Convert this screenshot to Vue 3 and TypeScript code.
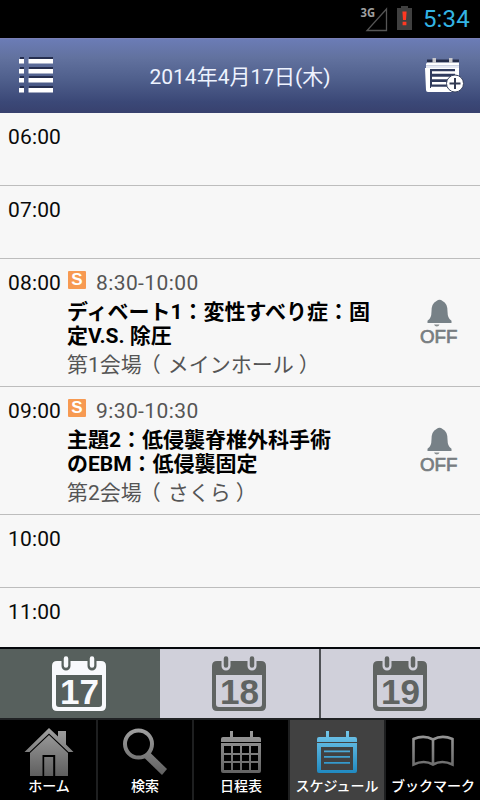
<script setup lang="ts">
interface Session {
  time: string
  title: string[]
  room: string
  hall: string
}
interface Slot {
  hour: string
  session?: Session
}

const slots: Slot[] = [
  { hour: '06:00' },
  { hour: '07:00' },
  {
    hour: '08:00',
    session: { time: '8:30-10:00', title: ['ディベート1：変性すべり症：固', '定V.S. 除圧'], room: '第1会場', hall: 'メインホール' },
  },
  {
    hour: '09:00',
    session: { time: '9:30-10:30', title: ['主題2：低侵襲脊椎外科手術', 'のEBM：低侵襲固定'], room: '第2会場', hall: 'さくら' },
  },
  { hour: '10:00' },
  { hour: '11:00' },
]
const days: string[] = ['17', '18', '19']
const activeDay = '17'
</script>

<template>
  <div class="screen">
    <div class="status">
      <svg class="signal" width="32" height="30" viewBox="-4 -2 32 30">
        <text x="0.500" y="12" class="net" textLength="14.500" lengthAdjust="spacingAndGlyphs">3G</text>
        <path d="M26.5 4 V25.5 H7 Z" fill="none" stroke="#555" stroke-width="1.3" />
      </svg>
      <svg class="battery" width="15" height="24" viewBox="0 0 15 24">
        <path d="M4 0h7v2h4v22H0V2h4z" fill="#404040" />
        <path d="M5.4 5.5h4.2l-.6 8.5H6z M5.6 15.8h3.8v3.4H5.6z" fill="#ff3822" />
      </svg>
      <span class="clock">5:34</span>
    </div>

    <header class="header">
      <svg class="menu" width="35" height="36" viewBox="0 0 35 36">
        <g fill="#262f50">
          <path d="M1 0h4v2H1zM10 0h24v2H10zM1 10h4v2H1zM10 10h24v2H10zM1 19h4v2H1zM10 19h24v2H10zM1 29h4v2H1zM10 29h24v2H10z" />
        </g>
        <path
          fill="#fff"
          d="M0 2h5v4.500H0zM9.500 2H34v4.500H9.500zM0 12h5v4.500H0zM9.500 12H34v4.500H9.500zM0 21h5v4.500H0zM9.500 21H34v4.500H9.500zM0 31h5v4.500H0zM9.500 31H34v4.500H9.500z"
        />
      </svg>
      <h1>2014年4月17日(木)</h1>
      <svg class="add" width="40" height="36" viewBox="0 0 40 36">
        <path d="M2 1.500h32v3H2z" fill="#252d49" />
        <path d="M2 4.500h32v2.800H1V6zM0 10h34v22q0 2-2 2H3q-2 0-2-2z" fill="#fff" />
        <path d="M1 7.300h33V10H1z" fill="#e5e8f2" />
        <path d="M7.500 0h3.500v5H7.500zM24 0h3.500v5H24z" fill="#c7c7cb" />
        <path d="M5 11h25v19H5z" fill="#303b5d" />
        <path d="M7 14.500h23M7 20h21M7 25.200h16M6 30h16" stroke="#fff" stroke-width="2.500" />
        <circle cx="30" cy="25.500" r="8.500" fill="#fff" stroke="#39435f" stroke-width="1" />
        <path d="M30 20v11M24.500 25.500h11" stroke="#333b52" stroke-width="2" />
      </svg>
    </header>

    <main class="list">
      <section v-for="slot in slots" :key="slot.hour" class="slot" :class="{ filled: slot.session }">
        <div class="hour">{{ slot.hour }}</div>
        <template v-if="slot.session">
          <div class="info">
            <div class="when"><span class="badge">S</span><span class="range">{{ slot.session.time }}</span></div>
            <div class="title">
              <div v-for="line in slot.session.title" :key="line">{{ line }}</div>
            </div>
            <div class="room">{{ slot.session.room }}<span class="open">（</span>{{ slot.session.hall }}<span class="close">）</span></div>
          </div>
          <svg class="bell" width="40" height="46" viewBox="0 0 40 46">
            <path
              d="M7.500 24v-2.200q4-2 4-9.500 0-8 5-10.300Q19.600-.6 22.500 2q5 2.300 5 10.300 0 7.500 4 9.500V24z"
              fill="#778187"
            />
            <path d="M14 25.500h5.500q-.7 2-2.700 2T14 25.500z" fill="#8a8f91" />
            <text x="0" y="43.500" class="off" textLength="37.500" lengthAdjust="spacingAndGlyphs">OFF</text>
          </svg>
        </template>
      </section>
    </main>

    <div class="days">
      <div v-for="day in days" :key="day" class="day" :class="{ active: day === activeDay }">
        <svg width="56" height="56" viewBox="0 0 56 56">
          <path
            fill-rule="evenodd"
            fill="currentColor"
            d="M6 5h44q5 0 5 5v40q0 5-5 5H6q-5 0-5-5V10q0-5 5-5zM5 19v29q0 3 3 3h40q3 0 3-3V19z"
          />
          <path class="gap" d="M15 3v7M41 3v7" />
          <path class="ring" d="M15 2.500v7M41 2.500v7" />
          <text x="28.500" y="47.500" class="num" textLength="39" lengthAdjust="spacingAndGlyphs">{{ day }}</text>
        </svg>
      </div>
    </div>

    <nav class="nav">
      <div class="item">
        <svg width="50" height="50" viewBox="0 0 50 50">
          <defs>
            <linearGradient id="grey" gradientUnits="userSpaceOnUse" x1="0" y1="0" x2="0" y2="50">
              <stop offset="0" stop-color="#a0a0a0" />
              <stop offset="1" stop-color="#5c5c5c" />
            </linearGradient>
            <linearGradient id="blue" gradientUnits="userSpaceOnUse" x1="0" y1="0" x2="0" y2="50">
              <stop offset="0" stop-color="#7acbed" />
              <stop offset="1" stop-color="#1683bd" />
            </linearGradient>
          </defs>
          <path fill="url(#grey)" d="M25 0l9 8.500V3h8v13.500l7.500 7.500h-5L25 5.500 5.500 24h-5z" />
          <path fill="url(#grey)" fill-rule="evenodd" d="M25 7l19 18v23H6V25zM18.500 27v21h1.700V29h9v19h2V27z" />
        </svg>
        <span>ホーム</span>
      </div>
      <div class="item">
        <svg width="50" height="50" viewBox="0 0 50 50">
          <circle cx="18.500" cy="16" r="13.500" fill="none" stroke="url(#grey)" stroke-width="4" />
          <path fill="url(#grey)" d="M24.500 30l5.500-5.500 17 16.500-5 6z" />
        </svg>
        <span>検索</span>
      </div>
      <div class="item">
        <svg width="50" height="50" viewBox="0 0 50 50">
          <path fill="url(#grey)" d="M14 3h3v7h-3zM34 3h3v7h-3zM7 9h36q2 0 2 2v3H5v-3q0-2 2-2z" />
          <path
            fill="url(#grey)"
            fill-rule="evenodd"
            d="M5 15h40v28q0 2-2 2H7q-2 0-2-2zM8 18v7h7v-7zM17 18v7h7v-7zM26 18v7h7v-7zM35 18v7h7v-7zM8 27v6h7v-6zM17 27v6h7v-6zM26 27v6h7v-6zM35 27v6h7v-6zM8 35v7h7v-7zM17 35v7h7v-7zM26 35v7h7v-7zM35 35v7h7v-7z"
          />
        </svg>
        <span>日程表</span>
      </div>
      <div class="item active">
        <svg width="50" height="50" viewBox="0 0 50 50">
          <path fill="url(#blue)" d="M14 3h3v7h-3zM34 3h3v7h-3zM7 9h36q2 0 2 2v3H5v-3q0-2 2-2z" />
          <path fill="url(#blue)" fill-rule="evenodd" d="M5 15h40v28q0 2-2 2H7q-2 0-2-2zM9 19v23h32V19z" />
          <path fill="url(#blue)" d="M12 22.500h26v1.800H12zM12 28h26v1.800H12zM12 34h26v1.800H12z" />
        </svg>
        <span>スケジュール</span>
      </div>
      <div class="item">
        <svg width="50" height="50" viewBox="0 0 50 50">
          <path
            fill="none"
            stroke="url(#grey)"
            stroke-width="2.600"
            d="M25 11.500Q16 6.500 5.500 11v25.500Q16 31.500 25 36.500 34 31.500 44.500 36.500V11Q34 6.500 25 11.500zV37"
          />
        </svg>
        <span>ブックマーク</span>
      </div>
    </nav>
  </div>
</template>

<style>
body {
  margin: 0;
  background: #000;
}
</style>

<style scoped>
.screen {
  width: 480px;
  height: 800px;
  display: flex;
  flex-direction: column;
  overflow: hidden;
  font-family: Roboto, "Noto Sans CJK JP", sans-serif;
  background: #000;
}
.status {
  height: 38px;
  flex: none;
  display: flex;
  justify-content: flex-end;
  align-items: flex-start;
  box-sizing: border-box;
  padding: 3px 10px 0 0;
}
.signal {
  margin-right: 9px;
  overflow: visible;
}
.net {
  font: 700 13px "Open Sans", sans-serif;
  fill: #a0a0a0;
}
.battery {
  margin: 3px 11px 0 0;
}
.clock {
  margin-top: 2px;
  font-size: 24px;
  line-height: 29px;
  letter-spacing: 0.2px;
  color: #33b5e5;
}
.header {
  height: 75px;
  flex: none;
  box-sizing: border-box;
  display: flex;
  align-items: flex-start;
  justify-content: space-between;
  padding: 20px 15px 0 19px;
  border-top: 1px solid #7a7fb5;
  background: linear-gradient(#6b7cb6 0%, #62729f 25%, #4f5f8c 55%, #3b4877 85%, #38416e 100%);
}
.header h1 {
  margin: 2px 0 0 0;
  padding-left: 1px;
  font-size: 21px;
  line-height: 32px;
  font-weight: 400;
  color: #eef3ff;
  white-space: nowrap;
}
.menu {
  margin-top: -2px;
}
.add {
  margin-top: -1px;
}
.list {
  height: 534px;
  flex: none;
  overflow: hidden;
  background: #f7f7f7;
}
.slot {
  height: 73px;
  box-sizing: border-box;
  display: flex;
  align-items: flex-start;
  padding: 10px 22px 0 8px;
  border-bottom: 1px solid #bdbdbd;
}
.slot.filled {
  height: 128px;
}
.hour {
  width: 59px;
  flex: none;
  font-size: 21px;
  line-height: 28px;
  letter-spacing: 0.15px;
  color: #0a0a0a;
}
.info {
  flex: 1;
  white-space: nowrap;
}
.when {
  height: 28px;
  display: flex;
  align-items: center;
  font-size: 21px;
  line-height: 28px;
  color: #555;
}
.range {
  letter-spacing: 0.4px;
}
.badge {
  width: 18px;
  height: 18px;
  margin: -6px 10px 0 1px;
  border-radius: 1px;
  background: #f79a52;
  color: #fff;
  font: 700 17px/18px "Liberation Sans", sans-serif;
  text-align: center;
}
.title {
  padding-top: 3px;
  font-size: 21px;
  line-height: 24px;
  font-weight: 700;
  color: #000;
}
.title div {
  height: 24px;
}
.room {
  margin-top: 3px;
  font-size: 21px;
  line-height: 28px;
  color: #555;
}
.open {
  margin: 0 7px 0 -2px;
}
.close {
  margin-left: 5px;
}
.bell {
  flex: none;
  margin: 30px -2px 0 0;
}
.off {
  font: 400 18px "Liberation Sans", sans-serif;
  fill: #777d81;
  stroke: #777d81;
  stroke-width: 0.7;
}
.days {
  height: 69px;
  flex: none;
  display: flex;
  border-top: 2px solid #05080c;
  border-bottom: 2px solid #202224;
}
.day {
  width: 160px;
  flex: none;
  box-sizing: border-box;
  display: flex;
  justify-content: center;
  padding: 7px 2px 0 0;
  background: #d0d0da;
  color: #606462;
}
.day:nth-child(2) {
  width: 161px;
  padding-right: 1px;
  border-right: 2px solid #505256;
}
.day:nth-child(3) {
  width: 159px;
  padding-right: 1px;
}
.day.active {
  background: #57605d;
  color: #f8f9fc;
}
.gap {
  fill: none;
  stroke: #d0d0da;
  stroke-width: 9;
  stroke-linecap: round;
}
.active .gap {
  stroke: #57605d;
}
.ring {
  fill: none;
  stroke: currentColor;
  stroke-width: 4.500;
  stroke-linecap: round;
}
.num {
  font: 700 35px "Liberation Sans", sans-serif;
  text-anchor: middle;
  fill: currentColor;
}
.nav {
  height: 80px;
  flex: none;
  display: flex;
}
.item {
  width: 96px;
  flex: none;
  box-sizing: border-box;
  display: flex;
  flex-direction: column;
  align-items: center;
  padding-top: 8px;
  border-left: 2px solid #1e1f20;
  color: #fff;
  font-size: 14px;
  line-height: 16px;
  font-weight: 500;
  white-space: nowrap;
}
.item:first-child {
  border-left-color: #000;
}
.item.active {
  background: #414141;
}
.item svg {
  flex: none;
}
</style>
